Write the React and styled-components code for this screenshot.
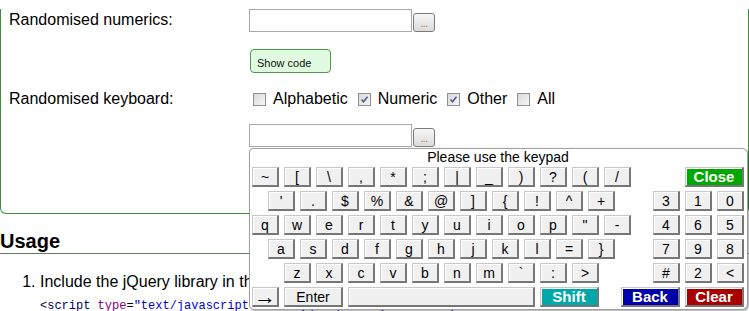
import React from "react";
import styled, { createGlobalStyle } from "styled-components";

const Global = createGlobalStyle`
  html, body { margin: 0; padding: 0; background: #fff; }
  body { font-family: "Liberation Sans", Arial, sans-serif; color: #000; overflow: hidden; }
`;

const Page = styled.div`
  position: relative;
  width: 749px;
  height: 311px;
  overflow: hidden;
`;

const DemoBox = styled.div`
  box-sizing: border-box;
  width: 749px;
  border: 1px solid #3f8a3f;
  border-top: none;
  border-radius: 0 0 6px 6px;
  padding: 0 0 66px 8px;
`;

const FormRow = styled.div`
  display: grid;
  grid-template-columns: 240px 1fr;
  margin-top: ${(p) => p.$top}px;
  min-height: ${(p) => p.$h || 0}px;
`;

const Label = styled.div`
  font-size: 16px;
  line-height: 18px;
  padding-top: 2px;
`;

const Controls = styled.div`
  display: flex;
  align-items: ${(p) => p.$align || "flex-start"};
  padding-top: ${(p) => p.$pad || 0}px;
`;

const TextInput = styled.div`
  box-sizing: border-box;
  width: 163px;
  height: 23px;
  border: 1px solid #a8a8a8;
  background: #fff;
`;

const DotsButton = styled.div`
  box-sizing: border-box;
  width: 22px;
  height: 19px;
  margin: 4px 0 0 1px;
  border: 1px solid #7a7a7a;
  border-radius: 3px;
  background: linear-gradient(#f6f6f6, #dcdcdc);
  color: #c86a00;
  font-size: 10px;
  line-height: 20px;
  text-align: center;
  letter-spacing: -0.5px;
`;

const ShowCode = styled.div`
  box-sizing: border-box;
  width: 81px;
  height: 24px;
  margin-left: 1px;
  border: 1px solid #4a9a4a;
  border-radius: 4px;
  background: #e0fbe0;
  font-size: 11px;
  line-height: 11px;
  padding: 8px 0 0 6px;
  color: #111;
`;

const Check = styled.span`
  box-sizing: border-box;
  width: 13px;
  height: 13px;
  margin: 0 7px 0 4px;
  border: 1px solid #8e8f8f;
  background: linear-gradient(135deg, #d8d8d8, #f7f7f7);
  display: inline-flex;
  align-items: center;
  justify-content: center;
`;

const CheckText = styled.span`
  font-size: 16px;
  line-height: 18px;
  margin-right: 6px;
`;

const Heading = styled.h2`
  margin: 15px 0 0;
  padding: 0;
  font-size: 20px;
  line-height: 24px;
  font-weight: bold;
  border-bottom: 1px solid #5e7e5e;
`;

const List = styled.ol`
  margin: 19px 0 0;
  padding-left: 40px;
  font-size: 16px;
  line-height: 18px;
`;

const Code = styled.div`
  margin-top: 8px;
  font-family: "Liberation Mono", "DejaVu Sans Mono", monospace;
  font-size: 12px;
  line-height: 14px;
  white-space: nowrap;
  color: #00006a;
`;

const Tok = styled.span`
  color: ${(p) => p.$c};
`;

const Popup = styled.div`
  position: absolute;
  left: 249px;
  top: 148px;
  box-sizing: border-box;
  width: 499px;
  height: 162px;
  border: 1px solid #a0a0a0;
  border-radius: 4px 6px 6px 5px;
  background: #fff;
  box-shadow: 1px 1px 2px rgba(0, 0, 0, 0.35);
  padding: 0 3px 0 2px;
`;

const Title = styled.div`
  text-align: center;
  font-size: 14px;
  line-height: 16px;
  margin-bottom: 2px;
`;

const Keyboard = styled.div`
  display: flex;
  flex-direction: column;
  gap: 4px;
`;

const KeyRow = styled.div`
  display: flex;
  justify-content: space-between;
  height: 20px;
`;

const KeyGroup = styled.div`
  display: flex;
  gap: 5px;
  padding-left: ${(p) => p.$offset || 0}px;
`;

const Key = styled.div`
  box-sizing: border-box;
  width: ${(p) => (p.$w || 1) * 27 + ((p.$w || 1) - 1) * 5}px;
  height: 20px;
  background: ${(p) => p.$bg || "#f0f0f0"};
  color: ${(p) => p.$fg || "#000"};
  font-weight: ${(p) => (p.$bg ? "bold" : "normal")};
  font-size: ${(p) => p.$size || (p.$bg ? 15 : 14)}px;
  border-top: 1px solid #c8c8c8;
  border-left: 1px solid #c8c8c8;
  border-right: 2px solid #767676;
  border-bottom: 2px solid #767676;
  box-shadow: inset 1px 1px 0 #fff;
  display: flex;
  align-items: center;
  justify-content: center;
  line-height: 16px;
  overflow: hidden;
`;

const CheckMark = () => (
  <svg width="9" height="9" viewBox="0 0 9 9">
    <path d="M1.5 4.5 L3.5 6.8 L7.5 1.8" fill="none" stroke="#4b5a96" strokeWidth="1.6" />
  </svg>
);

const CheckOpt = ({ checked, children }) => (
  <>
    <Check>{checked && <CheckMark />}</Check>
    <CheckText>{children}</CheckText>
  </>
);

const rows = [
  { offset: 0, keys: ["~", "[", "\\", ",", "*", ";", "|", "_", ")", "?", "(", "/"], right: [{ t: "Close", w: 2, bg: "#00a800" }] },
  { offset: 16, keys: ["'", ".", "$", "%", "&", "@", "]", "{", "!", "^", "+"], right: ["3", "1", "0"] },
  { offset: 0, keys: ["q", "w", "e", "r", "t", "y", "u", "i", "o", "p", "\"", "-"], right: ["4", "6", "5"] },
  { offset: 16, keys: ["a", "s", "d", "f", "g", "h", "j", "k", "l", "=", "}"], right: ["7", "9", "8"] },
  { offset: 32, keys: ["z", "x", "c", "v", "b", "n", "m", "`", ":", ">"], right: ["#", "2", "<"] },
  {
    offset: 0,
    keys: [
      { t: "→", size: 22 },
      { t: "Enter", w: 2 },
      { t: "", w: 6 },
      { t: "Shift", w: 2, bg: "#00a8a8" },
    ],
    right: [{ t: "Back", w: 2, bg: "#0000a8" }, { t: "Clear", w: 2, bg: "#a80000" }],
  },
];

const renderKey = (k, i) => {
  if (typeof k === "string") return <Key key={i}>{k}</Key>;
  return (
    <Key key={i} $w={k.w} $bg={k.bg} $size={k.size} $fg={k.bg ? "#fff" : undefined}>
      {k.t}
    </Key>
  );
};

export default function App() {
  return (
    <Page>
      <Global />
      <DemoBox>
        <FormRow $top={9}>
          <Label>Randomised numerics:</Label>
          <Controls>
            <TextInput />
            <DotsButton>...</DotsButton>
          </Controls>
        </FormRow>
        <FormRow $top={17}>
          <div />
          <Controls>
            <ShowCode>Show code</ShowCode>
          </Controls>
        </FormRow>
        <FormRow $top={15} $h={20}>
          <Label>Randomised keyboard:</Label>
          <Controls $align="center" $pad={2}>
            <CheckOpt>Alphabetic</CheckOpt>
            <CheckOpt checked>Numeric</CheckOpt>
            <CheckOpt checked>Other</CheckOpt>
            <CheckOpt>All</CheckOpt>
          </Controls>
        </FormRow>
        <FormRow $top={16}>
          <div />
          <Controls>
            <TextInput />
            <DotsButton>...</DotsButton>
          </Controls>
        </FormRow>
      </DemoBox>
      <Heading>Usage</Heading>
      <List>
        <li>
          Include the jQuery library in the head section of your page.
          <Code>
            &lt;script <Tok $c="#800080">type</Tok>
            <Tok $c="#000">=</Tok>
            <Tok $c="#0000e0">"text/javascript"</Tok> <Tok $c="#800080">src</Tok>
            <Tok $c="#000">=</Tok>
            <Tok $c="#0000e0">"jquery.min.js"</Tok>&gt;&lt;/script&gt;
          </Code>
        </li>
      </List>
      <Popup>
        <Title>Please use the keypad</Title>
        <Keyboard>
          {rows.map((r, ri) => (
            <KeyRow key={ri}>
              <KeyGroup $offset={r.offset}>{r.keys.map(renderKey)}</KeyGroup>
              <KeyGroup>{r.right.map(renderKey)}</KeyGroup>
            </KeyRow>
          ))}
        </Keyboard>
      </Popup>
    </Page>
  );
}
